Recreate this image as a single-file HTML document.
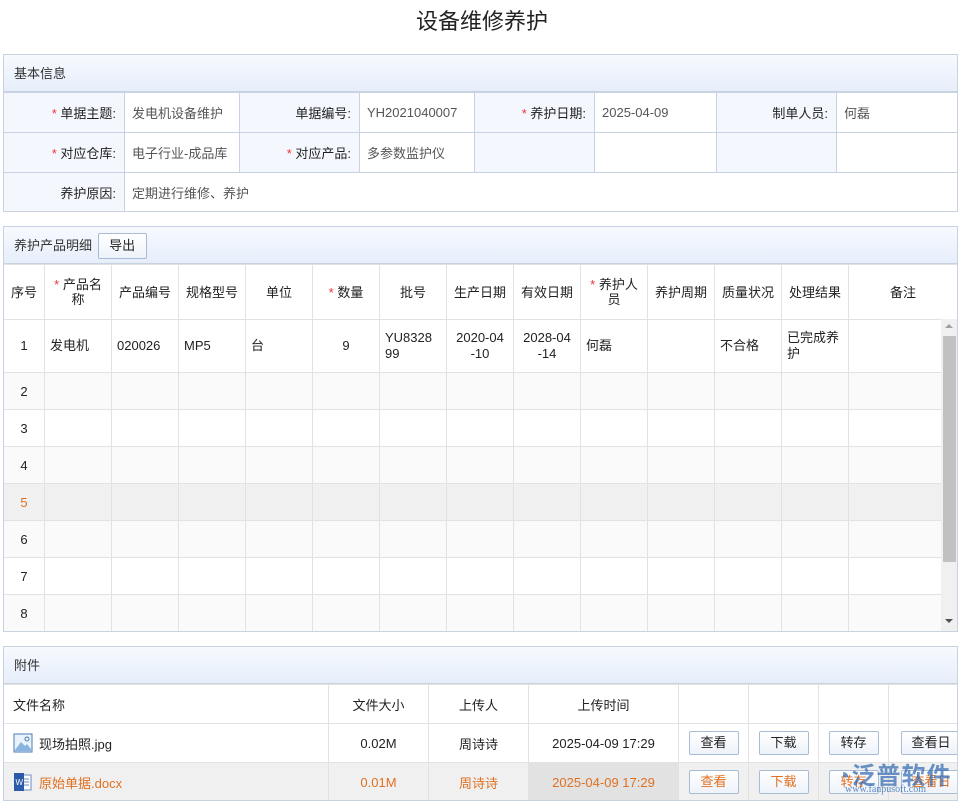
<!DOCTYPE html>
<html><head><meta charset="utf-8"><style>
*{box-sizing:border-box;margin:0;padding:0}
body{width:964px;height:805px;background:#fff;font-family:"Liberation Sans","Noto Sans CJK SC",sans-serif;font-size:13px;color:#333;position:relative;overflow:hidden}
.abs{position:absolute}
.title{left:0;width:964px;top:4px;text-align:center;font-size:22px;color:#222}
.panel{position:absolute;left:3px;width:955px;border:1px solid #c8d2e2}
.ph{height:37px;background:linear-gradient(#f7faff,#e6eefa);border-bottom:1px solid #c8d2e2;padding-left:10px;line-height:37px;color:#333}
table{border-collapse:collapse;table-layout:fixed}
td{border:1px solid #c8d2e2}
.lb{background:#f4f8fe;text-align:right;padding-right:8px;color:#222}
.vl{padding-left:7px;color:#555}
.r{color:#e33}
.g td{border:1px solid #e2e2e2;text-align:center;color:#222;padding:0 6px}
.g td.l{text-align:left;padding-left:5px}
.btn{display:inline-block;border:1px solid #a9bcd6;border-radius:2px;background:linear-gradient(#fff,#eef3fa);width:50px;height:24px;line-height:22px;text-align:center;color:#222}
.o td{color:#e07020}
</style></head><body>
<div class="abs title">设备维修养护</div>

<div class="panel" style="top:54px;height:158px;overflow:hidden">
<div class="ph">基本信息</div>
<table style="width:955px;margin-left:-1px">
<colgroup><col style="width:121px"><col style="width:115px"><col style="width:120px"><col style="width:115px"><col style="width:120px"><col style="width:122px"><col style="width:120px"><col></colgroup>
<tr style="height:40px"><td class="lb"><span class="r">* </span>单据主题:</td><td class="vl">发电机设备维护</td><td class="lb">单据编号:</td><td class="vl">YH2021040007</td><td class="lb"><span class="r">* </span>养护日期:</td><td class="vl">2025-04-09</td><td class="lb">制单人员:</td><td class="vl">何磊</td></tr>
<tr style="height:40px"><td class="lb"><span class="r">* </span>对应仓库:</td><td class="vl">电子行业-成品库</td><td class="lb"><span class="r">* </span>对应产品:</td><td class="vl">多参数监护仪</td><td class="lb"></td><td></td><td class="lb"></td><td></td></tr>
<tr style="height:40px"><td class="lb">养护原因:</td><td class="vl" colspan="7">定期进行维修、养护</td></tr>
</table>
</div>

<div class="panel" style="top:226px;height:406px;overflow:hidden">
<div class="ph">养护产品明细 <span class="btn" style="margin-left:2px;width:49px;height:26px;line-height:24px">导出</span></div>
<table class="g" style="width:955px;margin-left:-1px">
<colgroup><col style="width:41px"><col style="width:67px"><col style="width:67px"><col style="width:67px"><col style="width:67px"><col style="width:67px"><col style="width:67px"><col style="width:67px"><col style="width:67px"><col style="width:67px"><col style="width:67px"><col style="width:67px"><col style="width:67px"><col></colgroup>
<tr style="height:55px;line-height:15px"><td style="padding:0 2px">序号</td><td><span class="r">* </span>产品名称</td><td style="padding:0 2px">产品编号</td><td style="padding:0 2px">规格型号</td><td>单位</td><td><span class="r">* </span>数量</td><td>批号</td><td style="padding:0 2px">生产日期</td><td style="padding:0 2px">有效日期</td><td><span class="r">* </span>养护人员</td><td style="padding:0 2px">养护周期</td><td style="padding:0 2px">质量状况</td><td style="padding:0 2px">处理结果</td><td>备注</td></tr>
<tr style="height:53px;line-height:16px"><td>1</td><td class="l">发电机</td><td class="l">020026</td><td class="l">MP5</td><td class="l">台</td><td>9</td><td class="l">YU8328<br>99</td><td>2020-04<br>-10</td><td>2028-04<br>-14</td><td class="l">何磊</td><td></td><td class="l">不合格</td><td class="l">已完成养<br>护</td><td></td></tr>
<tr style="height:37px;background:#fafafa"><td>2</td><td></td><td></td><td></td><td></td><td></td><td></td><td></td><td></td><td></td><td></td><td></td><td></td><td></td></tr>
<tr style="height:37px"><td>3</td><td></td><td></td><td></td><td></td><td></td><td></td><td></td><td></td><td></td><td></td><td></td><td></td><td></td></tr>
<tr style="height:37px;background:#fafafa"><td>4</td><td></td><td></td><td></td><td></td><td></td><td></td><td></td><td></td><td></td><td></td><td></td><td></td><td></td></tr>
<tr style="height:37px;background:#f0f0f0"><td style="color:#e07020">5</td><td></td><td></td><td></td><td></td><td></td><td></td><td></td><td></td><td></td><td></td><td></td><td></td><td></td></tr>
<tr style="height:37px;background:#fafafa"><td>6</td><td></td><td></td><td></td><td></td><td></td><td></td><td></td><td></td><td></td><td></td><td></td><td></td><td></td></tr>
<tr style="height:37px"><td>7</td><td></td><td></td><td></td><td></td><td></td><td></td><td></td><td></td><td></td><td></td><td></td><td></td><td></td></tr>
<tr style="height:37px;background:#fafafa"><td>8</td><td></td><td></td><td></td><td></td><td></td><td></td><td></td><td></td><td></td><td></td><td></td><td></td><td></td></tr>
</table>
<div class="abs" style="left:937px;top:92px;width:17px;height:313px;background:#f0f0f0">
<div class="abs" style="left:4px;top:5px;width:0;height:0;border-left:4px solid transparent;border-right:4px solid transparent;border-bottom:4px solid #a0a0a0"></div>
<div class="abs" style="left:2px;top:17px;width:13px;height:226px;background:#c1c1c1"></div>
<div class="abs" style="left:4px;top:300px;width:0;height:0;border-left:4px solid transparent;border-right:4px solid transparent;border-top:4px solid #505050"></div>
</div>
</div>

<div class="panel" style="top:646px;height:155px;overflow:hidden">
<div class="ph">附件</div>
<table class="g" style="width:955px;margin-left:-1px">
<colgroup><col style="width:325px"><col style="width:100px"><col style="width:100px"><col style="width:150px"><col style="width:70px"><col style="width:70px"><col style="width:70px"><col></colgroup>
<tr style="height:39px"><td style="text-align:left;padding-left:9px">文件名称</td><td>文件大小</td><td>上传人</td><td>上传时间</td><td></td><td></td><td></td><td></td></tr>
<tr style="height:39px"><td style="text-align:left;padding-left:9px"><svg width="20" height="20" viewBox="0 0 20 20" style="vertical-align:-4px;margin-right:6px"><rect x="1" y="1" width="18" height="18" fill="#eaf2fb" stroke="#4a7ab5"/><path d="M2 17 L8 9 L12 13 L14 11 L18 16 L18 18 L2 18Z" fill="#8ab4e0"/><circle cx="14" cy="6" r="2" fill="none" stroke="#4a7ab5"/></svg>现场拍照.jpg</td><td>0.02M</td><td>周诗诗</td><td>2025-04-09 17:29</td><td><span class="btn">查看</span></td><td><span class="btn">下载</span></td><td><span class="btn">转存</span></td><td style="text-align:left;padding-left:12px"><span class="btn" style="width:60px">查看日</span></td></tr>
<tr class="o" style="height:39px;background:#f0f0f0"><td style="text-align:left;padding-left:9px"><svg width="20" height="20" viewBox="0 0 20 20" style="vertical-align:-4px;margin-right:6px"><rect x="6" y="3" width="12" height="15" fill="#fff" stroke="#6a8cc0"/><path d="M9 7h7M9 10h7M9 13h7" stroke="#6a8cc0"/><rect x="1" y="1" width="10" height="18" fill="#2b5aa8"/><text x="2.5" y="13" font-size="8" fill="#fff" font-family="Liberation Sans">W</text></svg>原始单据.docx</td><td>0.01M</td><td>周诗诗</td><td style="background:#e2e2e2">2025-04-09 17:29</td><td><span class="btn" style="color:#e07020">查看</span></td><td><span class="btn" style="color:#e07020">下载</span></td><td><span class="btn" style="color:#e07020">转存</span></td><td style="text-align:left;padding-left:12px"><span class="btn" style="width:60px;color:#e07020">查看日</span></td></tr>
</table>
</div>
<div class="abs" style="left:836px;top:756px;font-size:24px;color:#3a6fb5;font-weight:bold;opacity:.75;letter-spacing:1px">◔泛普软件</div>
<div class="abs" style="left:845px;top:784px;font-size:10px;color:#3a6fb5;font-family:'Liberation Serif',serif;opacity:.8">www.fanpusoft.com</div>
</body></html>
